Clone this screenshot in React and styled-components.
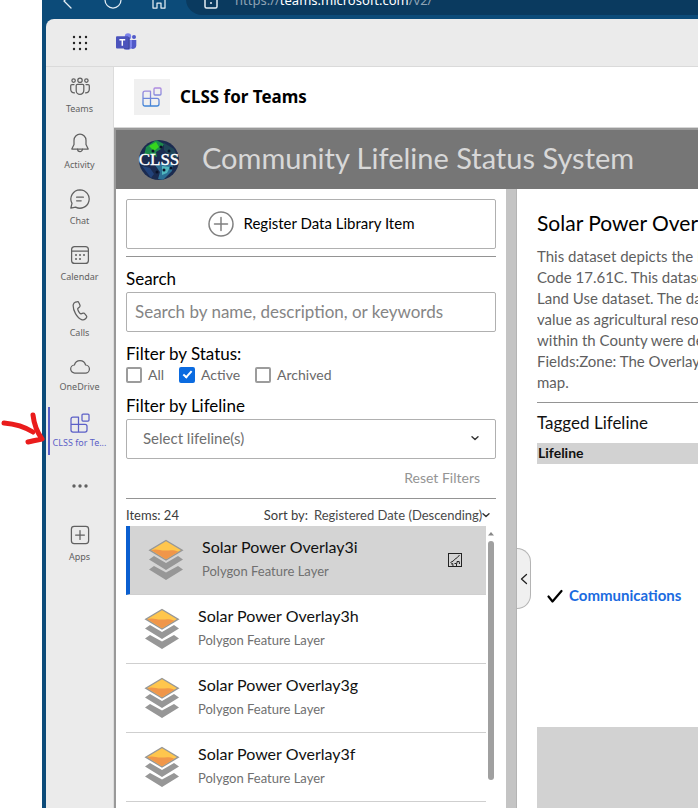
import React from "react";
import styled, { createGlobalStyle, css } from "styled-components";

const GlobalStyle = createGlobalStyle`
  *, *::before, *::after { box-sizing: border-box; }
  html, body { margin: 0; background: #fff; overflow: hidden; }
  button, input, select { font: inherit; color: inherit; margin: 0; }
  h1, h2, h3, p, ul { margin: 0; padding: 0; font-weight: 400; }
  ul { list-style: none; }
`;

const uiFont = `"Noto Sans", "Open Sans", sans-serif`;
const appFont = `Lato, "Open Sans", sans-serif`;

const Desktop = styled.div`
  position: relative;
  height: 100vh;
  padding-left: 42px;
  overflow: hidden;
`;

const BrowserWindow = styled.div`
  height: 100%;
  display: flex;
  flex-direction: column;
  background: #0c4b79;
`;

const BrowserBar = styled.div`
  height: 19px;
  flex: none;
  display: flex;
  align-items: flex-end;
  padding: 0 0 4px 2px;
  color: #e4edf4;
  overflow: hidden;
`;

const BarButton = styled.button`
  width: 46px;
  height: 24px;
  flex: none;
  padding: 0 0 6px;
  border: 0;
  background: none;
  color: inherit;
  display: flex;
  align-items: flex-end;
  justify-content: center;
`;

const AddressBar = styled.div`
  flex: 1;
  height: 32px;
  margin: 0 -20px 0 4px;
  padding: 0 0 6px 18px;
  display: flex;
  align-items: flex-end;
  gap: 17px;
  border-radius: 16px;
  background: #0a3a5f;
`;

const Address = styled.span`
  font: 13px/18px ${uiFont};
  color: #8fa3b4;
  b { font-weight: 400; color: #fff; }
`;

const Page = styled.div`
  flex: 1;
  min-height: 0;
  margin-left: 4px;
  display: flex;
  flex-direction: column;
  border-top-left-radius: 8px;
  background: #ebebeb;
  overflow: hidden;
`;

const TopBar = styled.header`
  height: 48px;
  flex: none;
  display: flex;
  align-items: center;
  gap: 26px;
  padding-left: 24px;
  border-bottom: 1px solid #dadada;
`;

const PlainButton = styled.button`
  display: flex;
  padding: 0;
  border: 0;
  background: none;
`;

const Body = styled.div`
  flex: 1;
  min-height: 0;
  display: flex;
`;

const Rail = styled.nav`
  width: 68px;
  flex: none;
  border-right: 1px solid #dcdcdc;
`;

const RailItem = styled.button`
  width: 100%;
  height: 56px;
  padding: 10px 0 0;
  border: 0;
  background: none;
  display: flex;
  flex-direction: column;
  align-items: center;
  gap: ${(p) => (p.$tight ? "3px" : "5px")};
  color: #616161;
  font: 9px/14px ${uiFont};
  white-space: nowrap;
  svg { flex: none; }
  ${(p) =>
    p.$active &&
    css`
      color: #5b5fc7;
      position: relative;
      &::before {
        content: "";
        position: absolute;
        left: 2px;
        top: 4px;
        width: 2px;
        height: 48px;
        background: #5b5fc7;
      }
    `}
`;

const MoreButton = styled(RailItem)`
  justify-content: center;
  padding: 0 0 2px;
`;

const Main = styled.main`
  flex: 1;
  min-width: 0;
  display: flex;
  flex-direction: column;
  background: #fff;
`;

const AppHeader = styled.div`
  height: 61px;
  flex: none;
  display: flex;
  align-items: center;
  gap: 10px;
  padding-left: 20px;
  border-bottom: 1px solid #d6d6d6;
  h1 { font: 700 17px/24px ${uiFont}; color: #000; }
`;

const AppTile = styled.div`
  width: 36px;
  height: 36px;
  display: grid;
  place-items: center;
  background: #f0f0f0;
`;

const Frame = styled.div`
  flex: 1;
  min-height: 0;
  display: flex;
  flex-direction: column;
  border: solid #999;
  border-width: 2px 0 0 2px;
  font-family: ${appFont};
  overflow: hidden;
`;

const Banner = styled.div`
  height: 59px;
  flex: none;
  display: flex;
  align-items: center;
  gap: 22px;
  padding-left: 22px;
  background: #767676;
  h2 {
    padding-bottom: 4px;
    font-size: 29px;
    line-height: 40px;
    color: #d8d8d8;
    white-space: nowrap;
  }
`;

const Columns = styled.div`
  flex: 1;
  min-height: 0;
  display: flex;
`;

const Library = styled.section`
  width: 390px;
  flex: none;
  padding: 10px 10px 0;
  display: flex;
  flex-direction: column;
`;

const RegisterButton = styled.button`
  height: 50px;
  flex: none;
  display: flex;
  align-items: center;
  justify-content: center;
  gap: 10px;
  border: 1px solid #b0b0b0;
  border-radius: 2px;
  background: #fff;
  font-size: 15px;
  color: #000;
  span { padding-bottom: 2px; }
`;

const Rule = styled.hr`
  width: 100%;
  height: 1px;
  flex: none;
  margin: ${(p) => p.$gap || "7px"} 0 0;
  border: 0;
  background: #949494;
`;

const FieldTitle = styled.label`
  display: block;
  margin-top: 11px;
  font-size: 17px;
  line-height: 22px;
  color: #000;
`;

const controlBox = css`
  width: 100%;
  height: 40px;
  margin-top: 2px;
  border: 1px solid #b0b0b0;
  border-radius: 2px;
  background: #fff;
  outline: 0;
`;

const SearchInput = styled.input`
  ${controlBox}
  flex: none;
  padding: 0 8px 2px;
  font-size: 17px;
  &::placeholder { color: #858585; opacity: 1; }
`;

const Checks = styled.div`
  display: flex;
  gap: 15px;
  margin-top: 1px;
`;

const CheckLabel = styled.label`
  display: flex;
  align-items: center;
  gap: 6px;
  height: 18px;
  font-size: 14px;
  color: #6a6a6a;
  span { padding-bottom: 2px; }
`;

const CheckBox = styled.input`
  appearance: none;
  position: relative;
  width: 16px;
  height: 16px;
  border: 2px solid #9c9c9c;
  border-radius: 2px;
  background: #fff;
  &:checked { border-color: #0b6be0; background: #0b6be0; }
  &:checked::after {
    content: "";
    position: absolute;
    left: 4px;
    top: 0;
    width: 5px;
    height: 9px;
    border: solid #fff;
    border-width: 0 2px 2px 0;
    transform: rotate(42deg);
  }
`;

const SelectWrap = styled.div`
  position: relative;
  display: flex;
  align-items: center;
  svg {
    position: absolute;
    right: ${(p) => p.$right || "0"};
    pointer-events: none;
  }
`;

const LifelineSelect = styled.select`
  ${controlBox}
  appearance: none;
  padding: 0 16px 2px;
  font-size: 15px;
  color: #707070;
`;

const ResetButton = styled.button`
  align-self: flex-end;
  margin: 9px 16px 0 0;
  padding: 0;
  border: 0;
  background: none;
  font-size: 14px;
  line-height: 20px;
  color: #949494;
`;

const ListHeader = styled.div`
  display: flex;
  align-items: center;
  justify-content: space-between;
  height: 27px;
  flex: none;
  padding: 5px 5px 0 0;
  font-size: 13px;
  color: #3c3c3c;
`;

const SortGroup = styled.div`
  display: flex;
  align-items: center;
  gap: 6px;
`;

const SortSelect = styled.select`
  appearance: none;
  padding: 0 8px 0 0;
  border: 0;
  background: none;
  color: #4a4a4a;
`;

const ListArea = styled.div`
  flex: 1;
  min-height: 0;
  display: flex;
  overflow: hidden;
`;

const Items = styled.ul`
  flex: 1;
`;

const Item = styled.li`
  height: 69px;
  display: flex;
  align-items: center;
  gap: 18px;
  padding: 0 24px 0 18px;
  border-bottom: 1px solid #cfcfcf;
  ${(p) =>
    p.$selected &&
    css`
      border-left: 4px solid #0a5fd0;
      background: #d4d4d4;
    `}
`;

const ItemText = styled.div`
  flex: 1;
  padding-bottom: 2px;
  h3 { font-size: 16px; line-height: 22px; color: #111; }
  p { margin-top: 2px; font-size: 13px; line-height: 22px; color: #707070; }
`;

const ScrollTrack = styled.div`
  width: 10px;
  flex: none;
  display: flex;
  flex-direction: column;
  align-items: center;
  gap: 5px;
  padding-top: 6px;
`;

const ScrollThumb = styled.div`
  width: 6px;
  height: 239px;
  border-radius: 3px;
  background: #a0a0a0;
`;

const Divider = styled.div`
  position: relative;
  width: 11px;
  flex: none;
  background: #c4c4c4;
  border-right: 1px solid #b4b4b4;
`;

const CollapseButton = styled.button`
  position: absolute;
  left: 11px;
  top: 359px;
  width: 14px;
  height: 61px;
  padding: 0;
  display: flex;
  align-items: center;
  justify-content: center;
  border: 1px solid #b4b4b4;
  border-left: 0;
  border-radius: 0 14px 14px 0;
  background: #f0f0f0;
`;

const Details = styled.section`
  flex: 1;
  min-width: 0;
  padding: 20px 0 0 20px;
  overflow: hidden;
  white-space: nowrap;
  h2 { font-size: 21px; line-height: 28px; color: #000; }
  h3 { margin-top: 9px; font-size: 17px; line-height: 22px; color: #111; }
`;

const Description = styled.p`
  padding-top: 9px;
  font-size: 15px;
  line-height: 21px;
  color: #5f5f5f;
  span { display: block; }
`;

const LifelineTable = styled.table`
  width: 100%;
  margin-top: 9px;
  border-collapse: collapse;
  th {
    height: 21px;
    padding: 0 1px 2px;
    background: #d2d2d2;
    font-size: 14px;
    line-height: 18px;
    font-weight: 700;
    text-align: left;
    color: #111;
  }
  td { height: 263px; padding: 0 10px; vertical-align: middle; }
  tr:nth-child(even) td { background: #d2d2d2; }
`;

const LifelineLink = styled.a`
  display: flex;
  align-items: center;
  gap: 6px;
  font-size: 15px;
  line-height: 20px;
  font-weight: 700;
  color: #1a6be0;
  text-decoration: none;
  span { padding-bottom: 2px; }
`;

const ArrowNote = styled.svg`
  position: absolute;
  left: 0;
  top: 408px;
  pointer-events: none;
`;

const Line = ({ size = 20, box = 20, children, width = 1.25, ...rest }) => (
  <svg
    width={size}
    height={size}
    viewBox={`0 0 ${box} ${box}`}
    fill="none"
    stroke="currentColor"
    strokeWidth={width}
    strokeLinecap="round"
    strokeLinejoin="round"
    aria-hidden="true"
    {...rest}
  >
    {children}
  </svg>
);

const Chevron = ({ size = 10 }) => (
  <Line size={size} box={10} width={1.4} stroke="#333">
    <path d="M2 3.8 5 6.6 8 3.8" />
  </Line>
);

const icons = {
  teams: (
    <>
      <circle cx="10" cy="3.2" r="2.2" />
      <circle cx="3.6" cy="3.6" r="1.7" />
      <circle cx="16.4" cy="3.6" r="1.7" />
      <path d="M6.2 8.6c0-.7.5-1.2 1.2-1.2h5.2c.7 0 1.2.5 1.2 1.2v5a3.8 3.8 0 0 1-7.6 0z" />
      <path d="M4 7.6H1.9c-.7 0-1.2.5-1.2 1.2v3.5c0 2.2 1.6 3.6 3.8 3.5M16 7.6h2.1c.7 0 1.2.5 1.2 1.2v3.5c0 2.2-1.6 3.6-3.8 3.5" />
    </>
  ),
  bell: (
    <>
      <path d="M10 1.2a6 6 0 0 0-6 6v4.2L1.8 16h16.4L16 11.4V7.2a6 6 0 0 0-6-6z" />
      <path d="M7.6 16.2a2.4 2.4 0 0 0 4.8 0" />
    </>
  ),
  chat: (
    <>
      <path d="M10 .8a9.2 9.2 0 1 1-4.4 17.3L.8 19.2 2 14.4A9.2 9.2 0 0 1 10 .8z" />
      <path d="M6.6 8.2h6.8M6.6 11.8h4.6" />
    </>
  ),
  calendar: (
    <>
      <rect x="1.6" y="1.6" width="16.8" height="16.8" rx="3" />
      <path d="M1.6 6h16.8" />
      <path strokeWidth="2" d="M6 10h.01M10 10h.01M14 10h.01M6 14h.01M10 14h.01" />
    </>
  ),
  phone: (
    <path d="M5.4 1.2 7 .8c.8-.2 1.6.2 1.9 1l1 2.3c.3.7.1 1.4-.4 1.9L7.8 7.5c-.2.7.1 1.7.9 3.1s1.5 2.1 2.2 2.3l2.2-.7c.7-.2 1.4 0 1.8.6l1.5 2c.5.7.4 1.6-.2 2.2l-1 1c-.8.8-2 1.1-3.1.8-2.5-.8-4.7-2.9-6.6-6.2S3 6.400 3.200 3.900c.2-1.200 1-2.300 2.200-2.700z" />
  ),
  cloud: (
    <path d="M5 16h10.200a4 4 0 0 0 .4-8 5.800 5.800 0 0 0-11.200 0A4 4 0 0 0 5 16z" />
  ),
  blocks: (
    <>
      <path d="M1 6.200C1 5 1.800 4.200 3 4.200h5.500v7.200H15c1.200 0 2 .8 2 2v3.600c0 1.200-.8 2-2 2H3c-1.200 0-2-.8-2-2zM1 11.400h7.500M8.500 11.400V19" />
      <rect x="12" y="1" width="7" height="7" rx="1" />
    </>
  ),
  apps: (
    <>
      <rect x="1.400" y="1.400" width="17.200" height="17.200" rx="2.800" />
      <path d="M10 5.600v8.800M5.600 10h8.800" />
    </>
  ),
};

const railItems = [
  { label: "Teams", icon: "teams" },
  { label: "Activity", icon: "bell" },
  { label: "Chat", icon: "chat" },
  { label: "Calendar", icon: "calendar" },
  { label: "Calls", icon: "phone" },
  { label: "OneDrive", icon: "cloud", tight: true },
  { label: "CLSS for Te...", icon: "blocks", tight: true, active: true },
];

const TeamsLogo = () => (
  <svg width="21" height="19" viewBox="0 0 21 19" aria-hidden="true">
    <circle cx="12" cy="3.4" r="3.2" fill="#7b83eb" />
    <circle cx="18" cy="4" r="2" fill="#5059c9" />
    <path d="M14 7h6.300v5.500a3.300 3.300 0 0 1-5.300 2.700z" fill="#5059c9" />
    <path d="M7 7h9v6.500a4.700 4.700 0 0 1-9 0z" fill="#7b83eb" />
    <path d="M7 4h5.500c.7 0 1.200.5 1.200 1.200v9.800c0 .7-.5 1.200-1.200 1.200H8z" fill="#3d4494" />
    <rect x="0" y="3.2" width="12.6" height="12.4" rx="1" fill="#4b53bc" />
    <path d="M3.400 6.800h5.800M6.300 6.800v6" stroke="#fff" strokeWidth="1.5" />
  </svg>
);

const Globe = () => (
  <svg width="42" height="42" viewBox="0 0 42 42" role="img" aria-label="CLSS">
    <defs>
      <clipPath id="globe"><circle cx="21" cy="21" r="20" /></clipPath>
    </defs>
    <g clipPath="url(#globe)">
      <rect width="42" height="42" fill="#1b2b50" />
      <path d="M8 8 18 1l8 4-3 5-5 3 1 5-8-3-5 2z" fill="#1c8a4c" />
      <path d="m11 7 7-4 3 5-5 4z" fill="#35d51d" />
      <path d="m26 4 10 6 4 10-8-3-6-6z" fill="#1f4658" />
      <path d="m17 26 8-2 10 1-1 7-9 9-5-1 2-7z" fill="#2b6f94" />
      <path d="m24 27 8 1-3 6-5 2z" fill="#4fb5bd" />
      <path d="m4 27 8 2 4 6-3 4z" fill="#22427a" />
      <g fill="#0a1228">
        <circle cx="15" cy="12" r="1.5" /><circle cx="23" cy="8" r="1.5" />
        <circle cx="31" cy="12" r="1.5" /><circle cx="26" cy="31" r="1.5" />
        <circle cx="19" cy="33" r="1.5" /><circle cx="33" cy="29" r="1.5" />
      </g>
    </g>
    <text x="21" y="26" textAnchor="middle" fontFamily="Liberation Serif, serif" fontSize="17" fill="#fff" stroke="#fff" strokeWidth=".4">CLSS</text>
  </svg>
);

const LayerIcon = () => (
  <svg width="36" height="42" viewBox="0 0 36 42" aria-hidden="true">
    <path d="m1 30.500 5-3.500L18 33.500 30 27l5 3.500L18 41z" fill="#979797" />
    <path d="m1 20.500 5-3.500L18 24 30 17l5 3.500L18 31z" fill="#979797" />
    <path d="M18 1.500 34.200 11.200 18 21 1.800 11.200z" fill="#ffc64d" stroke="#979797" strokeWidth="1.4" />
    <path d="M3.400 11.200c5-1.800 9 .6 14 .4 4-.2 8-1.200 13 1.200L18 20.200z" fill="#f0964a" />
  </svg>
);

const MapIcon = () => (
  <svg width="14" height="14" viewBox="0 0 14 14" fill="none" stroke="#222" aria-hidden="true">
    <rect x=".5" y=".5" width="13" height="13" />
    <path d="M11.500 2 9.400 4.500 6.500 6.500 5.300 8l-2.800 1.500M3 11l1.700-.5L5 13M6.500 10.500h2V13M9 10.500V8.500h2.200l.3 2.500" />
  </svg>
);

const items = [
  { name: "Solar Power Overlay3i", selected: true },
  { name: "Solar Power Overlay3h" },
  { name: "Solar Power Overlay3g" },
  { name: "Solar Power Overlay3f" },
];

const description = [
  "This dataset depicts the Kern",
  "Code 17.61C. This dataset",
  "Land Use dataset. The data",
  "value as agricultural resource",
  "within th County were derived",
  "Fields:Zone: The Overlay",
  "map.",
];

export default function App() {
  return (
    <Desktop>
      <GlobalStyle />
      <BrowserWindow>
        <BrowserBar>
          <BarButton aria-label="Back">
            <Line size={16} box={16}><path d="m12 1-7 7 7 7" /></Line>
          </BarButton>
          <BarButton aria-label="Refresh">
            <Line size={18} box={18}><circle cx="9" cy="9" r="8" /></Line>
          </BarButton>
          <BarButton aria-label="Home">
            <Line size={16} box={16}>
              <path d="M2 6.500 8 1l6 5.500V15h-4v-5H6v5H2z" />
            </Line>
          </BarButton>
          <AddressBar>
            <Line size={14} box={14} width={1.5}>
              <rect x="1" y="3" width="12" height="10" rx="1.5" />
              <path strokeWidth="2" d="M7 8h.01" />
            </Line>
            <Address>https://<b>teams.microsoft.com</b>/v2/</Address>
          </AddressBar>
        </BrowserBar>

        <Page>
          <TopBar>
            <PlainButton aria-label="App launcher">
              <svg width="20" height="20" viewBox="0 0 20 20" fill="#222">
                {[4, 10, 16].map((y) =>
                  [4, 10, 16].map((x) => <circle key={`${x}-${y}`} cx={x} cy={y} r="1.2" />)
                )}
              </svg>
            </PlainButton>
            <TeamsLogo />
          </TopBar>

          <Body>
            <Rail>
              {railItems.map((r) => (
                <RailItem key={r.label} $tight={r.tight} $active={r.active}>
                  <Line>{icons[r.icon]}</Line>
                  {r.label}
                </RailItem>
              ))}
              <MoreButton aria-label="More">
                <svg width="16" height="4" viewBox="0 0 16 4" fill="currentColor">
                  <circle cx="2" cy="2" r="1.7" /><circle cx="8" cy="2" r="1.7" /><circle cx="14" cy="2" r="1.7" />
                </svg>
              </MoreButton>
              <RailItem>
                <Line>{icons.apps}</Line>
                Apps
              </RailItem>
            </Rail>

            <Main>
              <AppHeader>
                <AppTile>
                  <Line size={20} stroke="url(#tile)" width={1.3}>
                    <defs>
                      <linearGradient id="tile" gradientUnits="userSpaceOnUse" x1="10" y1="0" x2="10" y2="20">
                        <stop offset="0" stopColor="#b48be0" />
                        <stop offset="1" stopColor="#3b84d6" />
                      </linearGradient>
                    </defs>
                    {icons.blocks}
                  </Line>
                </AppTile>
                <h1>CLSS for Teams</h1>
              </AppHeader>

              <Frame>
                <Banner>
                  <Globe />
                  <h2>Community Lifeline Status System</h2>
                </Banner>
                <Columns>
                  <Library>
                    <RegisterButton>
                      <Line size={26} box={26} stroke="#808080" width={1.5}>
                        <circle cx="13" cy="13" r="12" />
                        <path d="M13 6.500v13M6.500 13h13" />
                      </Line>
                      <span>Register Data Library Item</span>
                    </RegisterButton>
                    <Rule />
                    <FieldTitle htmlFor="search">Search</FieldTitle>
                    <SearchInput id="search" placeholder="Search by name, description, or keywords" />
                    <FieldTitle as="div" id="status">Filter by Status:</FieldTitle>
                    <Checks role="group" aria-labelledby="status">
                      <CheckLabel><CheckBox type="checkbox" /><span>All</span></CheckLabel>
                      <CheckLabel><CheckBox type="checkbox" defaultChecked /><span>Active</span></CheckLabel>
                      <CheckLabel><CheckBox type="checkbox" /><span>Archived</span></CheckLabel>
                    </Checks>
                    <FieldTitle htmlFor="lifeline">Filter by Lifeline</FieldTitle>
                    <SelectWrap $right="16px">
                      <LifelineSelect id="lifeline"><option>Select lifeline(s)</option></LifelineSelect>
                      <Chevron />
                    </SelectWrap>
                    <ResetButton>Reset Filters</ResetButton>
                    <Rule $gap="10px" />
                    <ListHeader>
                      <span>Items: 24</span>
                      <SortGroup>
                        <label htmlFor="sort">Sort by:</label>
                        <SelectWrap>
                          <SortSelect id="sort"><option>Registered Date (Descending)</option></SortSelect>
                          <Chevron />
                        </SelectWrap>
                      </SortGroup>
                    </ListHeader>
                    <ListArea>
                      <Items>
                        {items.map((it) => (
                          <Item key={it.name} $selected={it.selected}>
                            <LayerIcon />
                            <ItemText>
                              <h3>{it.name}</h3>
                              <p>Polygon Feature Layer</p>
                            </ItemText>
                            {it.selected && <MapIcon />}
                          </Item>
                        ))}
                      </Items>
                      <ScrollTrack>
                        <svg width="6" height="4" viewBox="0 0 6 4" fill="#888"><path d="M0 3.500 3 0l3 3.500z" /></svg>
                        <ScrollThumb />
                      </ScrollTrack>
                    </ListArea>
                  </Library>

                  <Divider>
                    <CollapseButton aria-label="Collapse panel">
                      <Line size={12} box={12} stroke="#222" width={1.3}><path d="M8.500 1.500 3.500 6l5 4.500" /></Line>
                    </CollapseButton>
                  </Divider>

                  <Details>
                    <h2>Solar Power Overlay3i</h2>
                    <Description>
                      {description.map((d) => <span key={d}>{d}</span>)}
                    </Description>
                    <Rule $gap="9px" />
                    <h3>Tagged Lifeline</h3>
                    <LifelineTable>
                      <thead><tr><th>Lifeline</th></tr></thead>
                      <tbody>
                        <tr>
                          <td>
                            <LifelineLink href="#communications">
                              <Line size={16} box={16} stroke="#000" width={2.2}><path d="m1.500 8.500 4 5L14.500 3" /></Line>
                              <span>Communications</span>
                            </LifelineLink>
                          </td>
                        </tr>
                        <tr><td /></tr>
                      </tbody>
                    </LifelineTable>
                  </Details>
                </Columns>
              </Frame>
            </Main>
          </Body>
        </Page>
      </BrowserWindow>

      <ArrowNote width="48" height="44" viewBox="0 0 48 44" fill="none" stroke="#ea1c1c" strokeWidth="5" strokeLinecap="round" strokeLinejoin="round" aria-hidden="true">
        <path d="M4 15c12 1 21 4 29 9" />
        <path d="M33 7c1 9 4 17 9 24-5 1-10 2-14 3" />
      </ArrowNote>
    </Desktop>
  );
}
